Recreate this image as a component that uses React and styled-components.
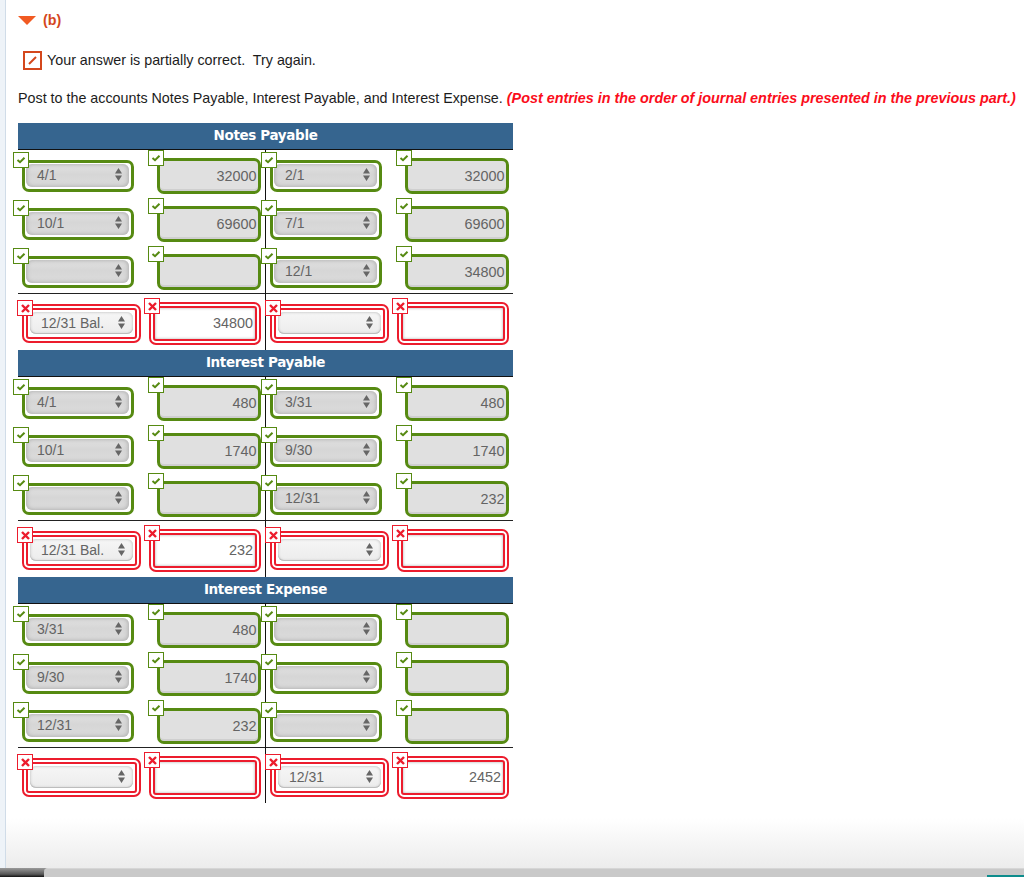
import React from 'react';
import styled, { createGlobalStyle } from 'styled-components';

const GREEN = '#568a12';
const RED = '#ec1c2d';

const GlobalStyle = createGlobalStyle`
	html, body {
		margin: 0;
		padding: 0;
		background: #fff;
	}
	body {
		font-family: "Liberation Sans", Arial, sans-serif;
		color: #1c1c1c;
	}
`;

const Page = styled.div`
	height: 877px;
	width: 1024px;
	overflow: hidden;
	display: flex;
	flex-direction: column;
`;

const Main = styled.main`
	flex: 1;
	box-sizing: border-box;
	border-left: 1px solid #d0dce8;
	margin-left: 5px;
	padding: 11px 0 0 12px;
	background: linear-gradient(to bottom, #fff calc(100% - 50px), #ececec);
	box-shadow: -5px 0 0 #eef3f8;
`;

const BottomBar = styled.div`
	height: 9px;
	flex: none;
	display: flex;
	background: linear-gradient(to bottom, #9a9a9a, #555 70%, #111);
`;

const BarTrack = styled.div`
	flex: 1;
	margin-left: 44px;
	background: #c9c9c9;
	border-top: 1px solid #d6d6d6;
	border-top-left-radius: 4px;
	display: flex;
	justify-content: flex-end;
	align-items: flex-end;
`;

const BarTeal = styled.div`
	width: 37px;
	height: 2px;
	background: #0d8c8c;
`;

const PartHeading = styled.div`
	display: flex;
	align-items: center;
	gap: 7px;
	height: 18px;
	font-size: 14.3px;
	font-weight: bold;
	color: #d4471c;
`;

const StatusRow = styled.div`
	display: flex;
	align-items: center;
	gap: 5px;
	margin: 21px 0 0 5px;
	height: 20px;
	font-size: 14.3px;
	white-space: pre;
`;

const StatusIcon = styled.span`
	width: 19px;
	height: 19px;
	box-sizing: border-box;
	border: 2px solid #d4471c;
	display: flex;
	align-items: center;
	justify-content: center;
`;

const Instruction = styled.p`
	margin: 19px 0 0;
	height: 18px;
	line-height: 18px;
	font-size: 14.3px;
	white-space: nowrap;
`;

const Hint = styled.em`
	color: #fb0d1b;
	font-weight: bold;
	font-size: 14.37px;
`;

const Ledger = styled.div`
	width: 495px;
	margin-top: 16px;
`;

const AccountHeader = styled.div`
	height: 27px;
	box-sizing: border-box;
	background: #36658f;
	border-bottom: 1px solid #111;
	color: #fff;
	font-family: "DejaVu Sans", Verdana, sans-serif;
	font-weight: bold;
	font-size: 13.5px;
	letter-spacing: -0.35px;
	line-height: 25px;
	text-align: center;
`;

const Row = styled.div`
	display: flex;
	height: ${({ $total, $last }) => ($total ? ($last ? 55 : 56) : 48)}px;
	${({ $total }) => $total && 'box-shadow: 0 -1px 0 #222;'}
`;

const Side = styled.div`
	box-sizing: border-box;
	width: ${({ $left }) => ($left ? 248 : 247)}px;
	padding: 0 4px;
	display: flex;
	justify-content: space-between;
	align-items: flex-start;
	${({ $left }) => $left && 'border-right: 1px solid #111;'}
`;

const SelectField = styled.div`
	position: relative;
	box-sizing: border-box;
	margin-top: 10px;
	border-radius: 7px;
	background: #fff;
	${({ $wrong }) => ($wrong ? `
		width: 119px;
		height: 39px;
		border: 6px double ${RED};
		padding: 2px;
	` : `
		width: 112px;
		height: 32px;
		border: 3px solid ${GREEN};
		padding: 1px;
	`)}
`;

const SelectBox = styled.div`
	width: 103px;
	box-sizing: border-box;
	display: flex;
	align-items: center;
	justify-content: space-between;
	border-radius: 6px;
	font-size: 14px;
	color: #646464;
	${({ $wrong }) => ($wrong ? `
		height: 22px;
		padding: 0 8px 1px 11px;
		background: linear-gradient(to bottom, #f6f6f6, #ececec);
		box-shadow: inset 0 0 3px #b0b0b0, inset 0 -1px 0 #c4c4c4;
	` : `
		height: 23px;
		padding: 0 7px 2px 11px;
		background: linear-gradient(to bottom, #e2e2e2, #d6d6d6 45%, #dcdcdc);
		box-shadow: inset 0 0 5px #a2a2a2;
	`)}
`;

const AmountField = styled.div`
	position: relative;
	box-sizing: border-box;
	margin-top: 8px;
	border-radius: 7px;
	text-align: right;
	font-size: 14.4px;
	color: #646464;
	padding-right: 2px;
	${({ $wrong }) => ($wrong ? `
		width: 112px;
		height: 43px;
		border: 6px double ${RED};
		line-height: 31px;
		background: #fff;
		box-shadow: inset 0 0 3px #aaa;
	` : `
		width: 104px;
		height: 36px;
		border: 3px solid ${GREEN};
		padding-right: 1.5px;
		line-height: 31px;
		background: #e0e0e0;
		box-shadow: inset 0 -2px 0 #cfcfcf;
	`)}
`;

const Badge = styled.span`
	position: absolute;
	left: ${({ $wrong }) => ($wrong ? -11 : -12)}px;
	top: ${({ $wrong }) => ($wrong ? -10 : -11)}px;
	width: 16px;
	height: 16px;
	box-sizing: border-box;
	background: #fff;
	border: 1.5px solid ${({ $wrong }) => ($wrong ? RED : GREEN)};
	display: flex;
	align-items: center;
	justify-content: center;
`;

const Check = () => (
	<svg width="10" height="8" viewBox="0 0 10 8">
		<path d="M1.5 4 L4 6.2 L8.5 1.8" fill="none" stroke={GREEN} strokeWidth="2" />
	</svg>
);

const Cross = () => (
	<svg width="9" height="9" viewBox="0 0 9 9">
		<path d="M1 1 L8 8 M8 1 L1 8" fill="none" stroke={RED} strokeWidth="2.4" />
	</svg>
);

const Stepper = () => (
	<svg width="7" height="13" viewBox="0 0 7 13">
		<path d="M3.5 0 L7 5.5 L0 5.5 Z M0 7.5 L7 7.5 L3.5 13 Z" fill="#666" />
	</svg>
);

const Select = ({ value, wrong }) => (
	<SelectField $wrong={wrong}>
		<Badge $wrong={wrong}>{wrong ? <Cross /> : <Check />}</Badge>
		<SelectBox $wrong={wrong}>
			<span>{value}</span>
			<Stepper />
		</SelectBox>
	</SelectField>
);

const Amount = ({ value, wrong }) => (
	<AmountField $wrong={wrong}>
		<Badge $wrong={wrong}>{wrong ? <Cross /> : <Check />}</Badge>
		{value}
	</AmountField>
);

const accounts = [
	{
		name: 'Notes Payable',
		rows: [
			['4/1', '32000', '2/1', '32000'],
			['10/1', '69600', '7/1', '69600'],
			['', '', '12/1', '34800'],
		],
		total: ['12/31 Bal.', '34800', '', ''],
	},
	{
		name: 'Interest Payable',
		rows: [
			['4/1', '480', '3/31', '480'],
			['10/1', '1740', '9/30', '1740'],
			['', '', '12/31', '232'],
		],
		total: ['12/31 Bal.', '232', '', ''],
	},
	{
		name: 'Interest Expense',
		rows: [
			['3/31', '480', '', ''],
			['9/30', '1740', '', ''],
			['12/31', '232', '', ''],
		],
		total: ['', '', '12/31', '2452'],
		last: true,
	},
];

const LedgerRow = ({ cells, total, last }) => (
	<Row $total={total} $last={last}>
		<Side $left>
			<Select value={cells[0]} wrong={total} />
			<Amount value={cells[1]} wrong={total} />
		</Side>
		<Side>
			<Select value={cells[2]} wrong={total} />
			<Amount value={cells[3]} wrong={total} />
		</Side>
	</Row>
);

export default function App() {
	return (
		<Page>
			<GlobalStyle />
			<Main>
				<PartHeading>
					<svg width="18" height="9" viewBox="0 0 18 9">
						<path d="M0 0 L18 0 L9 9 Z" fill="#f15a22" />
					</svg>
					(b)
				</PartHeading>
				<StatusRow>
					<StatusIcon>
						<svg width="11" height="11" viewBox="0 0 11 11">
							<path d="M2 9 L9 2" stroke="#d4471c" strokeWidth="2" />
						</svg>
					</StatusIcon>
					{'Your answer is partially correct.  Try again.'}
				</StatusRow>
				<Instruction>
					Post to the accounts Notes Payable, Interest Payable, and Interest Expense. <Hint>(Post entries in the order of journal entries presented in the previous part.)</Hint>
				</Instruction>
				<Ledger>
					{accounts.map(account => (
						<section key={account.name}>
							<AccountHeader>{account.name}</AccountHeader>
							{account.rows.map((cells, i) => (
								<LedgerRow key={i} cells={cells} />
							))}
							<LedgerRow cells={account.total} total last={account.last} />
						</section>
					))}
				</Ledger>
			</Main>
			<BottomBar>
				<BarTrack>
					<BarTeal />
				</BarTrack>
			</BottomBar>
		</Page>
	);
}
